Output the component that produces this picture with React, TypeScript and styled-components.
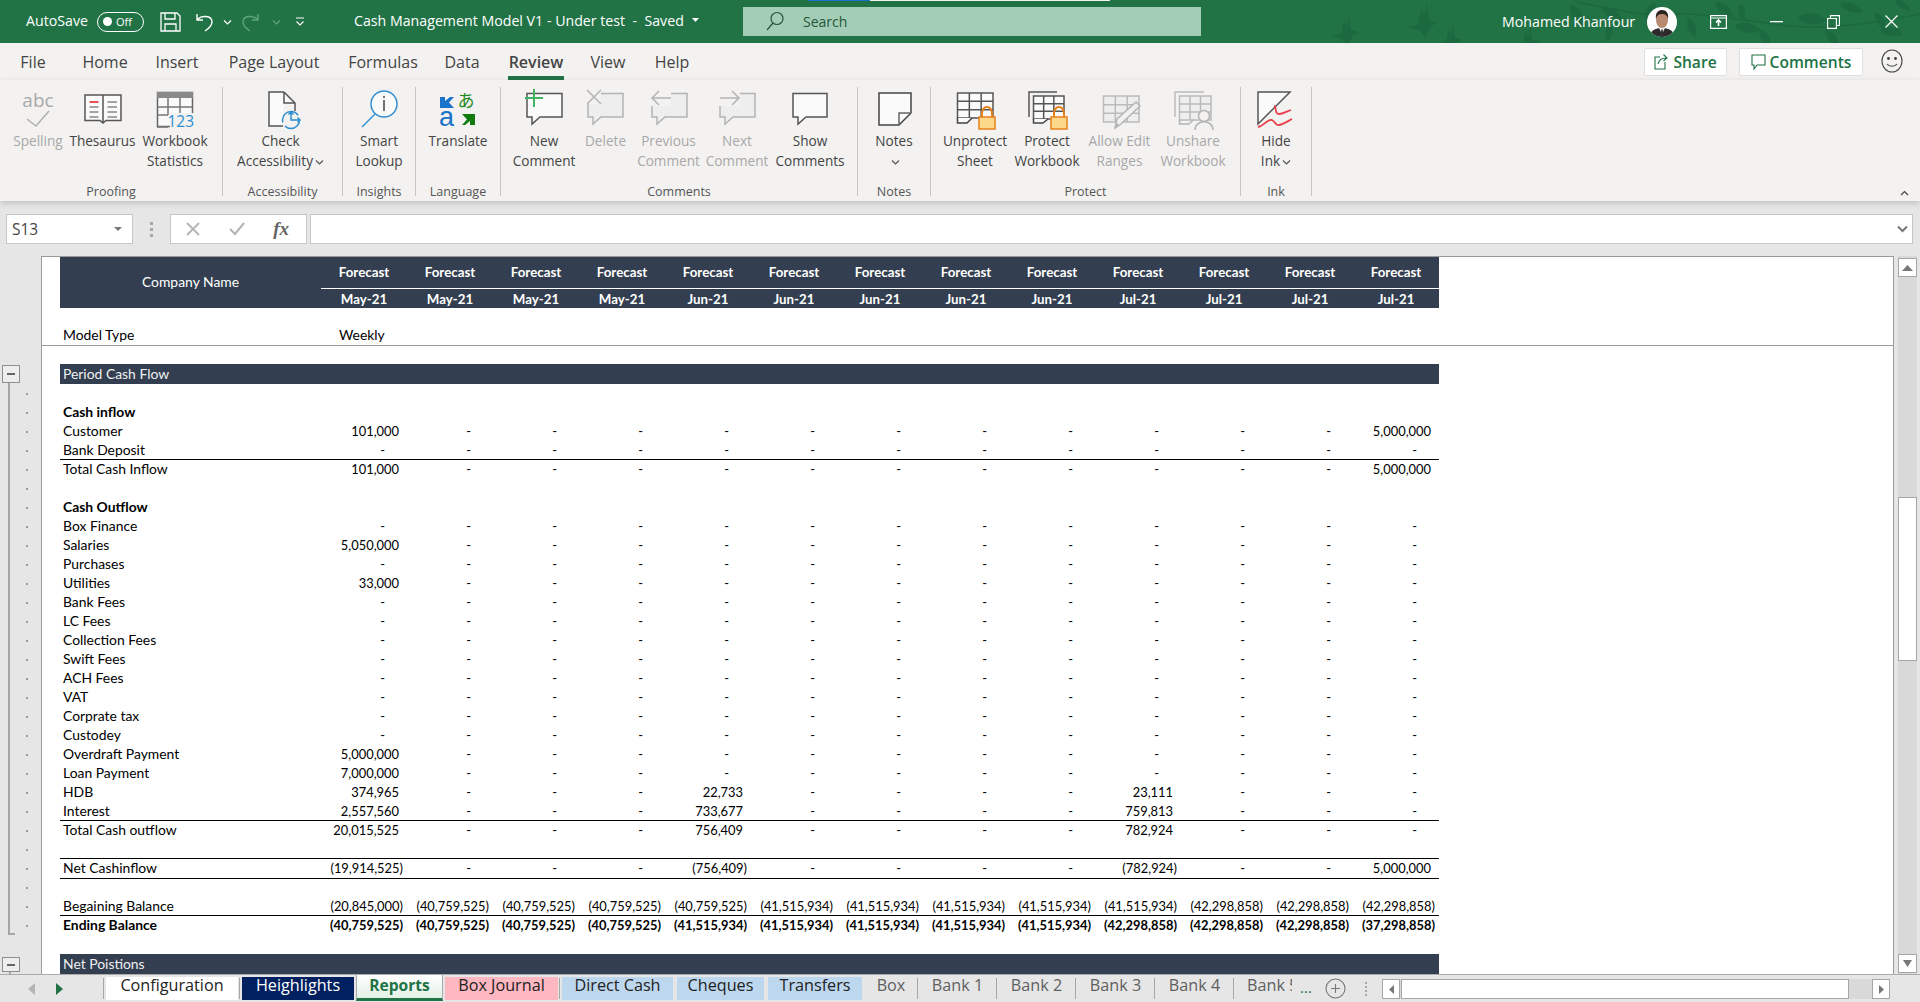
import React from 'react'
import styled, { createGlobalStyle } from 'styled-components'

const UI = `"Open Sans", "Noto Sans", sans-serif`
const CELL = `Lato, "Noto Sans", sans-serif`
const GREEN = '#217346'
const NAVY = '#333f50'

const Global = createGlobalStyle`
  html, body { margin: 0; height: 100%; background: #e6e6e6; overflow: hidden; }
  * { box-sizing: border-box; }
`

const Page = styled.div`
  width: 1920px; height: 1002px; display: flex; flex-direction: column;
  font-family: ${UI}; overflow: hidden; background: #e6e6e6;
`

/* title bar */
const TitleBar = styled.header`
  position: relative; height: 43px; flex: none; background: ${GREEN};
  display: flex; align-items: center; color: #fff; font-size: 14.2px; padding-left: 26px;
`
const LoadStrip = styled.div`
  position: absolute; top: 0; left: 808px; width: 302px; height: 1px;
  background: linear-gradient(to right, #1a73c9 0 62px, #f4f4f4 62px);
`
const Leaves = styled.svg`
  position: absolute; top: 0; left: 1320px; width: 600px; height: 43px;
`
const AutoSave = styled.span`width: 71px; margin-bottom: 2px;`
const Toggle = styled.div`
  width: 47px; height: 20px; border: 1px solid #fff; border-radius: 10px; display: flex;
  align-items: center; padding-left: 5px; gap: 4px; font-size: 11px; margin-right: 8px;
  &::before { content: ''; width: 9px; height: 9px; background: #fff; border-radius: 50%; }
`
const QatSlot = styled.div<{ $w: number }>`
  width: ${p => p.$w}px; display: flex; justify-content: center; align-items: center; flex: none;
`
const DocTitle = styled.div`
  width: 389px; margin-left: 36px; margin-bottom: 3px; display: flex; align-items: center; gap: 8px; white-space: pre;
`
const Search = styled.div`
  width: 458px; height: 29px; background: #a3cdb6; display: flex; align-items: center;
  padding: 0 0 1px 22px; gap: 18px; color: #24583a; font-size: 14px; position: relative;
`
const UserName = styled.span`margin-left: 301px; width: 145px; white-space: nowrap; position: relative; margin-bottom: 1px;`
const Avatar = styled.svg`width: 30px; height: 30px; flex: none; margin-right: 13px; position: relative;`
const WinSlot = styled.div`
  width: 57.5px; display: flex; justify-content: center; position: relative; flex: none;
`

/* ribbon tabs */
const TabsRow = styled.nav`
  height: 37px; flex: none; background: #f3f2f1; display: flex; color: #444; font-size: 16px;
`
const RibbonTab = styled.div<{ $w: number; $active?: boolean }>`
  width: ${p => p.$w}px; height: 37px; text-align: center; line-height: 38px; flex: none;
  font-weight: ${p => (p.$active ? 600 : 400)};
  position: relative;
  ${p => p.$active && `&::after { content: ''; position: absolute; left: 12px; right: 12px; bottom: 0; height: 4px; background: ${GREEN}; }`}
`
const TabsRight = styled.div`
  margin-left: auto; display: flex; align-items: flex-start; padding-top: 5px;
`
const GhostButton = styled.div<{ $w: number }>`
  width: ${p => p.$w}px; height: 28px; margin-right: 12px; background: #fff; border: 1px solid #e1dfdd;
  border-radius: 2px; display: flex; align-items: center; justify-content: center; gap: 4px; padding-bottom: 1px;
  color: ${GREEN}; font-weight: 600; font-size: 15.6px;
`
const Smiley = styled.div`
  width: 57px; margin-left: -12px; display: flex; justify-content: center; padding-top: 1px;
`

/* ribbon */
const Ribbon = styled.section`
  height: 121px; flex: none; background: #f3f2f1; display: flex; align-items: flex-start;
  padding-top: 7px; box-shadow: 0 2px 6px rgba(0, 0, 0, 0.18); position: relative; z-index: 2;
`
const Group = styled.div<{ $w: number; $pl?: number }>`
  width: ${p => p.$w}px; height: 109px; flex: none; border-right: 1px solid #c8c6c4;
  display: flex; flex-direction: column; padding-left: ${p => p.$pl ?? 0}px;
`
const GroupButtons = styled.div`display: flex; height: 85px; flex: none;`
const GroupLabel = styled.div<{ $pl?: number }>`
  margin-top: 12px; margin-left: ${p => -(p.$pl ?? 0)}px; height: 16px; line-height: 16px; text-align: center;
  font-size: 12.5px; color: #555;
`
const RibbonButton = styled.div<{ $w: number; $off?: boolean }>`
  width: ${p => p.$w}px; flex: none; display: flex; flex-direction: column; align-items: center;
  color: ${p => (p.$off ? '#a8a8a8' : '#444')}; font-size: 13.6px;
`
const IconBox = styled.div`height: 44px; flex: none; width: 44px;`
const ButtonText = styled.div`
  line-height: 20px; white-space: pre; text-align: center;
`
const Collapse = styled.div`
  margin-left: auto; width: 34px; height: 109px; display: flex; align-items: flex-end;
  justify-content: center;
`

/* formula bar */
const FormulaBar = styled.div`
  height: 55px; flex: none; display: flex; align-items: flex-start; padding: 13px 7px 0 6px;
`
const inputBox = `height: 30px; background: #fff; border: 1px solid #c6c6c6; display: flex; align-items: center;`
const NameBox = styled.div`
  ${inputBox} width: 127px; padding: 0 10px 0 5px; justify-content: space-between; font-size: 15.5px; color: #444;
`
const GripDots = styled.div`
  width: 37px; height: 30px; display: flex; flex-direction: column; justify-content: center; align-items: center; gap: 3px;
  & > i { width: 3px; height: 3px; background: #a6a6a6; display: block; }
`
const FxBox = styled.div`
  ${inputBox} width: 137px; justify-content: space-between; padding: 0 17px 0 15px;
`
const FxGlyph = styled.span`
  font-family: "Liberation Serif", serif; font-style: italic; font-size: 19px; font-weight: 700; color: #666;
`
const FormulaInput = styled.div`
  ${inputBox} flex: 1; margin-left: 3px; justify-content: flex-end; padding-right: 4px;
`

/* grid area */
const Main = styled.div`
  height: 718px; flex: none; display: flex; align-items: flex-start;
`
const Gutter = styled.aside`
  width: 41px; height: 718px; flex: none; padding-top: 109px; display: flex; flex-direction: column;
`
const OutlineButton = styled.div<{ $h: number; $mt?: number }>`
  width: 18px; height: ${p => p.$h}px; margin: ${p => p.$mt ?? 0}px 0 0 2px; border: 1px solid #8e8e8e; background: #eee;
  flex: none; display: flex; align-items: center; justify-content: center;
  &::before { content: ''; width: 8px; height: 2px; background: #666; }
`
const OutlineTrack = styled.div`
  position: relative; height: 570px; flex: none; padding-top: 1px;
  &::before {
    content: ''; position: absolute; left: 8px; top: 0; height: 550px; width: 5px;
    border-left: 2px solid #a6a6a6; border-bottom: 2px solid #a6a6a6;
  }
`
const OutlineDot = styled.div`
  height: 19px; display: flex; align-items: center; padding-left: 26px;
  &::before { content: ''; width: 2px; height: 2px; background: #9a9a9a; }
`
const OutlineStub = styled.div`
  margin-left: 9px; width: 2px; height: 2px; background: #a6a6a6;
`
const Sheet = styled.div`
  width: 1853px; height: 718px; flex: none; background: #fff; border: 1px solid #9a9a9a; border-bottom: 0;
  font-family: ${CELL}; font-size: 13.9px; color: #000; overflow: hidden;
`
const FrozenPane = styled.div`
  height: 89px; border-bottom: 1px solid #9a9a9a; padding-left: 18px;
`
const HeaderBlock = styled.div`
  width: 1379px; background: ${NAVY}; color: #fff; display: grid;
  grid-template-columns: 261px repeat(13, 86px); grid-template-rows: 32px 19px;
`
const CompanyName = styled.div`
  grid-row: 1 / span 2; display: flex; align-items: center; justify-content: center; padding-bottom: 3px;
`
const ForecastCell = styled.div`
  text-align: center; font-weight: 700; line-height: 30px; border-bottom: 1px solid #fff; font-size: 13.3px;
`
const MonthCell = styled.div`
  text-align: center; font-weight: 700; line-height: 20px; font-size: 13.3px;
`
const Row = styled.div<{ $top?: boolean; $bottom?: boolean; $bold?: boolean }>`
  width: 1379px; height: 19px; display: grid; grid-template-columns: 261px repeat(13, 86px);
  line-height: 19px; white-space: nowrap; position: relative;
  font-weight: ${p => (p.$bold ? 700 : 400)};
  ${p => p.$top && `&::before { content: ''; position: absolute; left: 0; right: 0; top: -1px; height: 1px; background: #000; }`}
  ${p => p.$bottom && `&::after { content: ''; position: absolute; left: 0; right: 0; bottom: -1px; height: 1px; background: #000; }`}
`
const ModelRow = styled(Row)`margin-top: 18px;`
const RowLabel = styled.div`padding-left: 3px; line-height: 18px;`
const WeeklyCell = styled.div`padding-left: 18px; line-height: 18px;`
const Cell = styled.div<{ $pad: number }>`
  text-align: right; padding-right: ${p => p.$pad}px; font-size: 12.9px;
`
const Body = styled.div`padding: 18px 0 0 18px;`
const SectionBar = styled.div`
  width: 1379px; height: 20px; background: ${NAVY}; color: #f0f0f0; line-height: 19px; padding-left: 3px;
`
const ScrollV = styled.div`
  width: 19px; height: 718px; flex: none; margin-left: 4px; background: #d9d9d9;
  display: flex; flex-direction: column; padding-top: 2px;
`
const ScrollVButton = styled.div`
  height: 19px; flex: none; background: #fff; border: 1px solid #a6a6a6; display: flex; align-items: center; justify-content: center;
`
const ScrollVThumb = styled.div`
  height: 164px; flex: none; margin-top: 220px; background: #fff; border: 1px solid #a6a6a6;
`
const ScrollVDown = styled(ScrollVButton)`margin-top: 293px;`

/* sheet tabs */
const SheetTabs = styled.footer`
  height: 28px; flex: none; display: flex; border-top: 1px solid #ababab; background: #e6e6e6; position: relative;
  font-size: 16.2px;
`
const TabNav = styled.div`
  width: 104px; flex: none; display: flex; align-items: center; padding-left: 27px; gap: 21px; position: relative;
  &::after { content: ''; position: absolute; right: 0; top: 3px; bottom: 3px; width: 1px; background: #a6a6a6; }
`
const SheetTab = styled.div<{ $w: number; $bg?: string; $fg?: string; $sep?: boolean }>`
  width: ${p => p.$w}px; flex: none; padding: 2px; position: relative; color: ${p => p.$fg ?? '#5f5f5f'};
  ${p => p.$sep && `&::after { content: ''; position: absolute; right: 0; top: 3px; bottom: 3px; width: 1px; background: #a6a6a6; }`}
  & > span {
    display: block; height: 23px; line-height: 17px; text-align: center; background: ${p => p.$bg ?? 'transparent'};
    white-space: nowrap;
  }
`
const ActiveSheetTab = styled.div<{ $w: number }>`
  width: ${p => p.$w}px; flex: none; height: 27px; margin-top: -1px; line-height: 21px; text-align: center;
  border: 1px solid #ababab; border-bottom: 3px solid ${GREEN};
  background: linear-gradient(#fff, #e3f0e7); color: ${GREEN}; font-weight: 700; font-size: 15.6px;
`
const ClippedTab = styled.div`
  width: 45px; margin-left: 13px; flex: none; overflow: hidden; white-space: nowrap; color: #5f5f5f; line-height: 21px;
`
const MoreDots = styled.div`
  width: 19px; flex: none; margin-left: 8px; color: ${GREEN}; line-height: 25px; font-size: 15px;
`
const AddSheet = styled.div`
  width: 33px; flex: none; display: flex; align-items: center; justify-content: center;
`
const SplitDots = styled(GripDots)`width: 27px; height: 27px; gap: 2px; & > i { width: 2px; height: 2px; }`
const ScrollH = styled.div`
  width: 508px; height: 20px; margin-top: 4px; margin-left: 3px; flex: none; display: flex; background: #d9d9d9;
`
const ScrollHButton = styled.div`
  width: 18px; flex: none; background: #fff; border: 1px solid #a6a6a6; display: flex; align-items: center; justify-content: center;
`
const ScrollHThumb = styled.div`
  width: 448px; margin-left: 1px; flex: none; background: #fff; border: 1px solid #a6a6a6;
`
const ScrollHTrack = styled.div`flex: 1;`

/* icons */
type IP = { children: React.ReactNode }
const Ico = ({ children }: IP) => (
  <svg width="44" height="45" viewBox="0 0 44 45" fill="none" strokeWidth="1.5" overflow="visible">{children}</svg>
)
const balloon = (x: number, r: number) => `M${x} 6.5H${r}V30H${x + 13}L${x + 5} 37V30H${x}Z`
const Balloon = ({ x, r, off }: { x: number; r: number; off?: boolean }) => (
  <path d={balloon(x, r)} fill={off ? '#eeeeee' : '#fafafa'} stroke={off ? '#b4b4b4' : '#555'} />
)
const Grid = ({ x, r, t, b, c, fill = '#fafafa' }: { x: number; r: number; t: number; b: number; c: string; fill?: string }) => {
  const w = (r - x) / 3
  const h = (b - t) / 3
  return (
    <g stroke={c}>
      <rect x={x} y={t} width={r - x} height={b - t} fill={fill} />
      <path d={`M${x + w} ${t}V${b}M${x + 2 * w} ${t}V${b}M${x} ${t + h}H${r}M${x} ${t + 2 * h}H${r}`} />
    </g>
  )
}
const Lock = ({ x }: { x: number }) => (
  <g>
    <path d={`M${x + 3} 30V26a5 6 0 0 1 10 0V30`} stroke="#e8801a" strokeWidth="2" />
    <rect x={x} y="30" width="16" height="12" fill="#fcd98a" stroke="#e8801a" />
  </g>
)

const Icons: Record<string, React.ReactNode> = {
  spelling: (
    <Ico>
      <text x="22" y="20" textAnchor="middle" fontFamily={UI} fontSize="19" fill="#a8a8a8">abc</text>
      <path d="M11 32L20 39L33 24" stroke="#b0b0b0" />
    </Ico>
  ),
  thesaurus: (
    <Ico>
      <path d="M22 8H4V33.5H19L22 36L25 33.5H40V8H22V36" fill="#fafafa" stroke="#555" />
      <path d="M8.5 15H17.5" stroke="#e8535a" strokeWidth="2" />
      <path d="M8.5 20H17.5M8.5 25H17.5M8.5 30H17.5M26.5 15H36M26.5 20H36M26.5 25H36M26.5 30H36" stroke="#888" />
    </Ico>
  ),
  stats: (
    <Ico>
      <rect x="4.5" y="5.5" width="35" height="34" fill="#fafafa" stroke="#666" />
      <rect x="4" y="5" width="36" height="6" fill="#8a8a8a" />
      <path d="M15 11V28M27 11V26M4 20H40M4 28H15M15 40H4" stroke="#777" />
      <rect x="17" y="26" width="24" height="15" fill="#f3f2f1" />
      <text x="41" y="40" textAnchor="end" fontFamily={UI} fontSize="15.5" fill="#2e8fd0">123</text>
    </Ico>
  ),
  access: (
    <Ico>
      <path d="M25 5H10V39H24M25 5L36 16V24M25 5V16H36" fill="#fafafa" stroke="#555" />
      <circle cx="32" cy="33" r="8.5" fill="#f3f2f1" stroke="#2e8fd0" strokeDasharray="20 4 24 5" />
      <path d="M32 25V33H41M38.5 30.5L41 33L38.5 35.5M29.5 27.5L32 25L34.5 27.5" stroke="#2e8fd0" />
    </Ico>
  ),
  lookup: (
    <Ico>
      <circle cx="27" cy="17" r="13" fill="#fafafa" stroke="#2e8fd0" />
      <path d="M18 27L5 40" stroke="#2e8fd0" />
      <path d="M27 13V24" stroke="#444" />
      <circle cx="27" cy="10" r="1" fill="#444" />
    </Ico>
  ),
  translate: (
    <Ico>
      <path d="M4 10H9V14L14 10H18L13 15.5L18 21H4Z" fill="#1a73c9" />
      <text x="10.5" y="39" textAnchor="middle" fontFamily={`"Liberation Sans", sans-serif`} fontSize="27" fill="#1a73c9">a</text>
      <text x="30" y="20" textAnchor="middle" fontFamily={`"Noto Sans CJK JP", sans-serif`} fontSize="17" fill="#1e8a1e">あ</text>
      <path d="M39 38H34V34L29 38H26L31 32.5L26 27H39Z" fill="#107c10" />
    </Ico>
  ),
  newc: (
    <Ico>
      <Balloon x={5} r={40} />
      <path d="M12 2V20M3 11H21" stroke="#3fb562" strokeWidth="2" />
    </Ico>
  ),
  del: (
    <Ico>
      <Balloon x={4} r={39} off />
      <rect x="2" y="2" width="15" height="15" fill="#f3f2f1" />
      <path d="M3 3L17 17M17 3L3 17" stroke="#b4b4b4" />
    </Ico>
  ),
  prev: (
    <Ico>
      <Balloon x={5} r={40} off />
      <rect x="3" y="3" width="21" height="16" fill="#f3f2f1" />
      <path d="M24 11H5M12 4L5 11L12 18" stroke="#b4b4b4" />
    </Ico>
  ),
  next: (
    <Ico>
      <Balloon x={5} r={40} off />
      <rect x="4" y="3" width="21" height="16" fill="#f3f2f1" />
      <path d="M5 11H24M17 4L24 11L17 18" stroke="#b4b4b4" />
    </Ico>
  ),
  show: <Ico><Balloon x={5} r={39} /></Ico>,
  notes: (
    <Ico>
      <path d="M7 6H39V26L27 38H7Z" fill="#fafafa" stroke="#444" />
      <path d="M39 26H27V38" stroke="#666" />
    </Ico>
  ),
  unprotect: (
    <Ico>
      <Grid x={4.5} r={40} t={6} b={31} c="#555" />
      <path d="M4.5 31V36H14L19 31" fill="#fafafa" stroke="#444" />
      <Lock x={26} />
    </Ico>
  ),
  protect: (
    <Ico>
      <path d="M4 30V5H32" stroke="#555" />
      <Grid x={8.5} r={39} t={9} b={32} c="#555" />
      <path d="M8.5 32V36H18L23 32" fill="#fafafa" stroke="#444" />
      <Lock x={26} />
    </Ico>
  ),
  allow: (
    <Ico>
      <Grid x={5.5} r={41} t={9} b={35} c="#bbb" fill="#eeeeee" />
      <path d="M17 41L19 32L38 15L42 19L23 37Z" fill="#f0f0f0" stroke="#b4b4b4" />
      <path d="M17 41L19 36L21 38Z" fill="#b4b4b4" />
    </Ico>
  ),
  unshare: (
    <Ico>
      <path d="M4 30V5H33" stroke="#bbb" />
      <Grid x={8.5} r={40} t={9} b={33} c="#bbb" fill="#eeeeee" />
      <path d="M8.5 33V37H18L22 33" stroke="#b4b4b4" />
      <circle cx="33" cy="29" r="5.5" fill="#f3f2f1" stroke="#b4b4b4" />
      <path d="M24 43C24 32 42 32 42 43" fill="#f3f2f1" stroke="#b4b4b4" />
    </Ico>
  ),
  ink: (
    <Ico>
      <path d="M4 5H36L4 37Z" fill="#fafafa" stroke="#555" />
      <path d="M20 19C23 19 20 27 25 27C29 27 33 24 37 23" stroke="#e8404a" strokeWidth="1.8" />
      <path d="M4 40C10 39 13 32 18 33C21 34 21 39 25 38C30 37 34 34 38 32" stroke="#e8404a" strokeWidth="1.8" />
    </Ico>
  ),
}

const ChevronSvg = styled.svg`vertical-align: 1px; margin-left: 2px;`
const Chevron = ({ c = '#555', up }: { c?: string; up?: boolean }) => (
  <ChevronSvg width="9" height="6" viewBox="0 0 9 6" fill="none" stroke={c} strokeWidth="1.2">
    <path d={up ? 'M1 5L4.5 1.5L8 5' : 'M1 1.5L4.5 5L8 1.5'} />
  </ChevronSvg>
)

const groups = [
  { label: 'Proofing', w: 223, pl: 9, items: [
    { t: 'Spelling', i: 'spelling', w: 58, off: true },
    { t: 'Thesaurus', i: 'thesaurus', w: 71 },
    { t: 'Workbook\nStatistics', i: 'stats', w: 74 },
  ] },
  { label: 'Accessibility', w: 120, pl: 0, items: [{ t: 'Check\nAccessibility', i: 'access', w: 115, menu: true }] },
  { label: 'Insights', w: 73, pl: 0, items: [{ t: 'Smart\nLookup', i: 'lookup', w: 72 }] },
  { label: 'Language', w: 85, pl: 0, items: [{ t: 'Translate', i: 'translate', w: 84 }] },
  { label: 'Comments', w: 357, pl: 12, items: [
    { t: 'New\nComment', i: 'newc', w: 62 },
    { t: 'Delete', i: 'del', w: 61, off: true },
    { t: 'Previous\nComment', i: 'prev', w: 65, off: true },
    { t: 'Next\nComment', i: 'next', w: 72, off: true },
    { t: 'Show\nComments', i: 'show', w: 74 },
  ] },
  { label: 'Notes', w: 73, pl: 0, items: [{ t: 'Notes', i: 'notes', w: 72, below: true }] },
  { label: 'Protect', w: 310, pl: 8, items: [
    { t: 'Unprotect\nSheet', i: 'unprotect', w: 72 },
    { t: 'Protect\nWorkbook', i: 'protect', w: 72 },
    { t: 'Allow Edit\nRanges', i: 'allow', w: 73, off: true },
    { t: 'Unshare\nWorkbook', i: 'unshare', w: 74, off: true },
  ] },
  { label: 'Ink', w: 71, pl: 0, items: [{ t: 'Hide\nInk', i: 'ink', w: 70, menu: true }] },
]

const ribbonTabs: [string, number][] = [
  ['File', 66], ['Home', 78], ['Insert', 66], ['Page Layout', 128], ['Formulas', 90],
  ['Data', 68], ['Review', 80], ['View', 64], ['Help', 64],
]

const months = ['May-21', 'May-21', 'May-21', 'May-21', 'Jun-21', 'Jun-21', 'Jun-21', 'Jun-21', 'Jun-21', 'Jul-21', 'Jul-21', 'Jul-21', 'Jul-21']

type RowDef = { label?: string; vals?: Record<number, string>; all?: string[]; top?: boolean; bottom?: boolean; bold?: boolean }

const fill = (...parts: [number, string][]) => parts.flatMap(([n, v]) => Array<string>(n).fill(v))

const rows: RowDef[] = [
  {},
  { label: 'Cash inflow', bold: true, all: [] },
  { label: 'Customer', vals: { 0: '101,000', 12: '5,000,000' } },
  { label: 'Bank Deposit', vals: {} },
  { label: 'Total Cash Inflow', vals: { 0: '101,000', 12: '5,000,000' }, top: true },
  {},
  { label: 'Cash Outflow', bold: true, all: [] },
  { label: 'Box Finance', vals: {} },
  { label: 'Salaries', vals: { 0: '5,050,000' } },
  { label: 'Purchases', vals: {} },
  { label: 'Utilities', vals: { 0: '33,000' } },
  { label: 'Bank Fees', vals: {} },
  { label: 'LC Fees', vals: {} },
  { label: 'Collection Fees', vals: {} },
  { label: 'Swift Fees', vals: {} },
  { label: 'ACH Fees', vals: {} },
  { label: 'VAT', vals: {} },
  { label: 'Corprate tax', vals: {} },
  { label: 'Custodey', vals: {} },
  { label: 'Overdraft Payment', vals: { 0: '5,000,000' } },
  { label: 'Loan Payment', vals: { 0: '7,000,000' } },
  { label: 'HDB', vals: { 0: '374,965', 4: '22,733', 9: '23,111' } },
  { label: 'Interest', vals: { 0: '2,557,560', 4: '733,677', 9: '759,813' } },
  { label: 'Total Cash outflow', vals: { 0: '20,015,525', 4: '756,409', 9: '782,924' }, top: true },
  {},
  { label: 'Net Cashinflow', vals: { 0: '(19,914,525)', 4: '(756,409)', 9: '(782,924)', 12: '5,000,000' }, top: true, bottom: true },
  {},
  { label: 'Begaining Balance', all: fill([1, '(20,845,000)'], [4, '(40,759,525)'], [5, '(41,515,934)'], [3, '(42,298,858)']) },
  { label: 'Ending Balance', bold: true, top: true, all: fill([4, '(40,759,525)'], [5, '(41,515,934)'], [3, '(42,298,858)'], [1, '(37,298,858)']) },
  {},
]

const padFor = (v: string) => (v === '-' ? 22 : v.startsWith('(') ? 4 : 8)

const DataRow = ({ d }: { d: RowDef }) => {
  const vals = d.all ?? (d.vals ? months.map((_, i) => d.vals![i] ?? '-') : [])
  return (
    <Row $top={d.top} $bottom={d.bottom} $bold={d.bold}>
      <RowLabel>{d.label}</RowLabel>
      {vals.map((v, i) => <Cell key={i} $pad={padFor(v)}>{v}</Cell>)}
    </Row>
  )
}

const leaf = (x: number, y: number, r: number, s = 1) => (
  <path
    key={`${x}-${y}`}
    transform={`translate(${x} ${y}) rotate(${r}) scale(${s})`}
    d="M0 0C6 -7 18 -7 26 0C18 6 6 6 0 0Z"
  />
)
const bird = (x: number, y: number, s = 1) => (
  <path
    key={`b${x}-${y}`}
    transform={`translate(${x} ${y}) scale(${s})`}
    d="M0 8L9 6L12 -8L15 -2L17 -14L19 2L27 4L20 8L16 18L11 12Z"
  />
)

export default function App() {
  return (
    <Page>
      <Global />
      <TitleBar>
        <LoadStrip />
        <Leaves viewBox="0 0 600 43" fill="#1c693f">
          {bird(12, 28, 1)}
          {bird(88, 18, 1.1)}
          {bird(118, 36, 0.9)}
          {bird(195, 38, 0.9)}
          {[
            [250, 4, 60, 1], [282, 8, 30, 0.9], [290, 24, 100, 0.7], [335, 2, 120, 0.8], [368, 18, 70, 0.8],
            [395, 2, 40, 0.9], [415, 26, 10, 1], [440, 30, 60, 0.8], [478, 18, 5, 1.1], [505, 30, 50, 0.8],
            [520, 4, 20, 0.9], [555, 12, 60, 0.8], [560, 30, 10, 0.9], [420, 4, 80, 0.7], [575, 0, 35, 0.7],
          ].map(([x, y, r, s]) => leaf(x, y, r, s))}
          <path d="M255 2C300 10 320 16 345 14C380 12 420 20 470 26C510 30 560 22 600 14" fill="none" stroke="#1c693f" strokeWidth="1.5" />
        </Leaves>
        <AutoSave>AutoSave</AutoSave>
        <Toggle>Off</Toggle>
        <QatSlot $w={36}>
          <svg width="21" height="20" viewBox="0 0 21 20" fill="none" stroke="#fff" strokeWidth="1.3">
            <path d="M1 1H17L20 4V19H1ZM5 1V7H15V1M5 19V12H16V19" />
          </svg>
        </QatSlot>
        <QatSlot $w={33}>
          <svg width="18" height="20" viewBox="0 0 18 20" fill="none" stroke="#fff" strokeWidth="1.4">
            <path d="M1 2V8H7M1 8C5 3 16 3 16 10C16 14 12 17 9 19" />
          </svg>
        </QatSlot>
        <QatSlot $w={11}><Chevron c="#fff" /></QatSlot>
        <QatSlot $w={36}>
          <svg width="18" height="20" viewBox="0 0 18 20" fill="none" stroke="#5fa47e" strokeWidth="1.4">
            <path d="M17 2V8H11M17 8C13 3 2 3 2 10C2 14 6 17 9 19" />
          </svg>
        </QatSlot>
        <QatSlot $w={14}><Chevron c="#5fa47e" /></QatSlot>
        <QatSlot $w={36}>
          <svg width="10" height="10" viewBox="0 0 10 10" fill="none" stroke="#fff" strokeWidth="1.2">
            <path d="M1 1H9M1.5 4.5L5 8L8.5 4.5" />
          </svg>
        </QatSlot>
        <DocTitle>
          <span>Cash Management Model V1 - Under test  -  Saved</span>
          <svg width="7" height="4" viewBox="0 0 7 4" fill="#fff"><path d="M0 0H7L3.5 4Z" /></svg>
        </DocTitle>
        <Search>
          <svg width="20" height="20" viewBox="0 0 20 20" fill="none" stroke="#24583a" strokeWidth="1.2">
            <circle cx="12" cy="7.5" r="6" />
            <path d="M8 12L2 19" />
          </svg>
          Search
        </Search>
        <UserName>Mohamed Khanfour</UserName>
        <Avatar viewBox="0 0 30 30">
          <defs><clipPath id="av"><circle cx="15" cy="15" r="15" /></clipPath></defs>
          <g clipPath="url(#av)">
            <rect width="30" height="30" fill="#fff" />
            <path d="M3 30C3 23 9 21 15 21C21 21 27 23 27 30Z" fill="#2d2a2c" />
            <path d="M12 21L15 27L18 21Z" fill="#f2f2f2" />
            <path d="M14.2 22.5H15.8L16.3 30H13.7Z" fill="#333" />
            <ellipse cx="15" cy="13" rx="6" ry="8" fill="#b98a70" />
            <path d="M9 12C8 5 12 3 15 3C19 3 22 6 21 12C20 8 18 7 15 7C12 7 10 8 9 12Z" fill="#2b2320" />
          </g>
        </Avatar>
        <WinSlot>
          <svg width="17" height="14" viewBox="0 0 17 14" fill="none" stroke="#fff" strokeWidth="1.2">
            <path d="M.6.6H16.4V13.4H.6ZM.6 3H16.4" />
            <path d="M8.5 11V5M6 7.5L8.5 5L11 7.5" strokeWidth="1.6" />
          </svg>
        </WinSlot>
        <WinSlot>
          <svg width="13" height="2" viewBox="0 0 13 2"><rect width="13" height="1.3" fill="#fff" /></svg>
        </WinSlot>
        <WinSlot>
          <svg width="13" height="14" viewBox="0 0 13 14" fill="none" stroke="#fff" strokeWidth="1.1">
            <path d="M.6 3.5H9.4V13.4H.6ZM3.5 3.5V.6H12.4V10.5H9.4" />
          </svg>
        </WinSlot>
        <WinSlot>
          <svg width="13" height="13" viewBox="0 0 13 13" stroke="#fff" strokeWidth="1.2"><path d="M.5.5L12.5 12.5M12.5.5L.5 12.5" /></svg>
        </WinSlot>
      </TitleBar>

      <TabsRow>
        {ribbonTabs.map(([t, w]) => (
          <RibbonTab key={t} $w={w} $active={t === 'Review'}>{t}</RibbonTab>
        ))}
        <TabsRight>
          <GhostButton $w={83}>
            <svg width="15" height="17" viewBox="0 0 15 17" fill="none" stroke={GREEN} strokeWidth="1.1">
              <path d="M6 4H1V16H11V9" />
              <path d="M4 11C5 7 8 5 12 5M9.5 1.5L13 5L9.5 8" />
            </svg>
            Share
          </GhostButton>
          <GhostButton $w={124}>
            <svg width="15" height="16" viewBox="0 0 15 16" fill="none" stroke={GREEN} strokeWidth="1.1">
              <path d="M1 1H14V11H6L3 15V11H1Z" />
            </svg>
            Comments
          </GhostButton>
          <Smiley>
            <svg width="22" height="24" viewBox="0 0 22 24" fill="none" stroke="#444" strokeWidth="1.1">
              <ellipse cx="11" cy="12" rx="10" ry="11" />
              <circle cx="7.5" cy="9.5" r=".9" fill="#444" />
              <circle cx="14.5" cy="9.5" r=".9" fill="#444" />
              <path d="M6 15C8 18 14 18 16 15" />
            </svg>
          </Smiley>
        </TabsRight>
      </TabsRow>

      <Ribbon>
        {groups.map(g => (
          <Group key={g.label} $w={g.w} $pl={g.pl}>
            <GroupButtons>
              {g.items.map((b: any) => (
                <RibbonButton key={b.t} $w={b.w} $off={b.off}>
                  <IconBox>{Icons[b.i]}</IconBox>
                  <ButtonText>
                    {b.t}
                    {b.menu && <Chevron />}
                    {b.below && <>{'\n'}<Chevron /></>}
                  </ButtonText>
                </RibbonButton>
              ))}
            </GroupButtons>
            <GroupLabel $pl={g.pl}>{g.label}</GroupLabel>
          </Group>
        ))}
        <Collapse><Chevron up c="#444" /></Collapse>
      </Ribbon>

      <FormulaBar>
        <NameBox>
          S13
          <svg width="8" height="4" viewBox="0 0 8 4" fill="#777"><path d="M0 0H8L4 4Z" /></svg>
        </NameBox>
        <GripDots><i /><i /><i /></GripDots>
        <FxBox>
          <svg width="14" height="14" viewBox="0 0 14 14" stroke="#b4b4b4" strokeWidth="1.8"><path d="M1 1L13 13M13 1L1 13" /></svg>
          <svg width="16" height="14" viewBox="0 0 16 14" fill="none" stroke="#b4b4b4" strokeWidth="2"><path d="M1 7L6 12L15 1" /></svg>
          <FxGlyph>fx</FxGlyph>
        </FxBox>
        <FormulaInput>
          <svg width="11" height="8" viewBox="0 0 11 8" fill="none" stroke="#777" strokeWidth="2"><path d="M1 1.5L5.5 6L10 1.5" /></svg>
        </FormulaInput>
      </FormulaBar>

      <Main>
        <Gutter>
          <OutlineButton $h={18} />
          <OutlineTrack>
            {Array.from({ length: 29 }, (_, i) => <OutlineDot key={i} />)}
          </OutlineTrack>
          <OutlineButton $h={15} $mt={4} />
          <OutlineStub />
        </Gutter>
        <Sheet>
          <FrozenPane>
            <HeaderBlock>
              <CompanyName>Company Name</CompanyName>
              {months.map((_, i) => <ForecastCell key={i}>Forecast</ForecastCell>)}
              {months.map((m, i) => <MonthCell key={i}>{m}</MonthCell>)}
            </HeaderBlock>
            <ModelRow>
              <RowLabel>Model Type</RowLabel>
              <WeeklyCell>Weekly</WeeklyCell>
            </ModelRow>
          </FrozenPane>
          <Body>
            <SectionBar>Period Cash Flow</SectionBar>
            {rows.map((d, i) => <DataRow key={i} d={d} />)}
            <SectionBar>Net Poistions</SectionBar>
          </Body>
        </Sheet>
        <ScrollV>
          <ScrollVButton>
            <svg width="11" height="6" viewBox="0 0 11 6" fill="#777"><path d="M0 6L5.5 0L11 6Z" /></svg>
          </ScrollVButton>
          <ScrollVThumb />
          <ScrollVDown>
            <svg width="9" height="7" viewBox="0 0 9 7" fill="#777"><path d="M0 0H9L4.5 7Z" /></svg>
          </ScrollVDown>
        </ScrollV>
      </Main>

      <SheetTabs>
        <TabNav>
          <svg width="8" height="12" viewBox="0 0 8 12" fill="#b4b4b4"><path d="M8 0V12L1 6Z" /></svg>
          <svg width="8" height="12" viewBox="0 0 8 12" fill={GREEN}><path d="M0 0V12L7 6Z" /></svg>
        </TabNav>
        <SheetTab $w={136} $bg="#fff" $fg="#222" $sep><span>Configuration</span></SheetTab>
        <SheetTab $w={116} $bg="#002060" $fg="#fff"><span>Heighlights</span></SheetTab>
        <ActiveSheetTab $w={87}>Reports</ActiveSheetTab>
        <SheetTab $w={117} $bg="#ffb7c1" $fg="#222" $sep><span>Box Journal</span></SheetTab>
        <SheetTab $w={115} $bg="#bdd7ee" $fg="#222"><span>Direct Cash</span></SheetTab>
        <SheetTab $w={91} $bg="#bdd7ee" $fg="#222"><span>Cheques</span></SheetTab>
        <SheetTab $w={98} $bg="#bdd7ee" $fg="#222"><span>Transfers</span></SheetTab>
        <SheetTab $w={54} $sep><span>Box</span></SheetTab>
        <SheetTab $w={79} $sep><span>Bank 1</span></SheetTab>
        <SheetTab $w={79} $sep><span>Bank 2</span></SheetTab>
        <SheetTab $w={79} $sep><span>Bank 3</span></SheetTab>
        <SheetTab $w={79} $sep><span>Bank 4</span></SheetTab>
        <ClippedTab>Bank 5</ClippedTab>
        <MoreDots>...</MoreDots>
        <AddSheet>
          <svg width="21" height="21" viewBox="0 0 21 21" fill="none" stroke="#777" strokeWidth="1.1">
            <circle cx="10.5" cy="10.5" r="9.5" />
            <path d="M10.5 6V15M6 10.5H15" />
          </svg>
        </AddSheet>
        <SplitDots><i /><i /><i /><i /></SplitDots>
        <ScrollH>
          <ScrollHButton>
            <svg width="5" height="9" viewBox="0 0 5 9" fill="#777"><path d="M5 0V9L0 4.5Z" /></svg>
          </ScrollHButton>
          <ScrollHThumb />
          <ScrollHTrack />
          <ScrollHButton>
            <svg width="5" height="9" viewBox="0 0 5 9" fill="#777"><path d="M0 0V9L5 4.5Z" /></svg>
          </ScrollHButton>
        </ScrollH>
      </SheetTabs>
    </Page>
  )
}
